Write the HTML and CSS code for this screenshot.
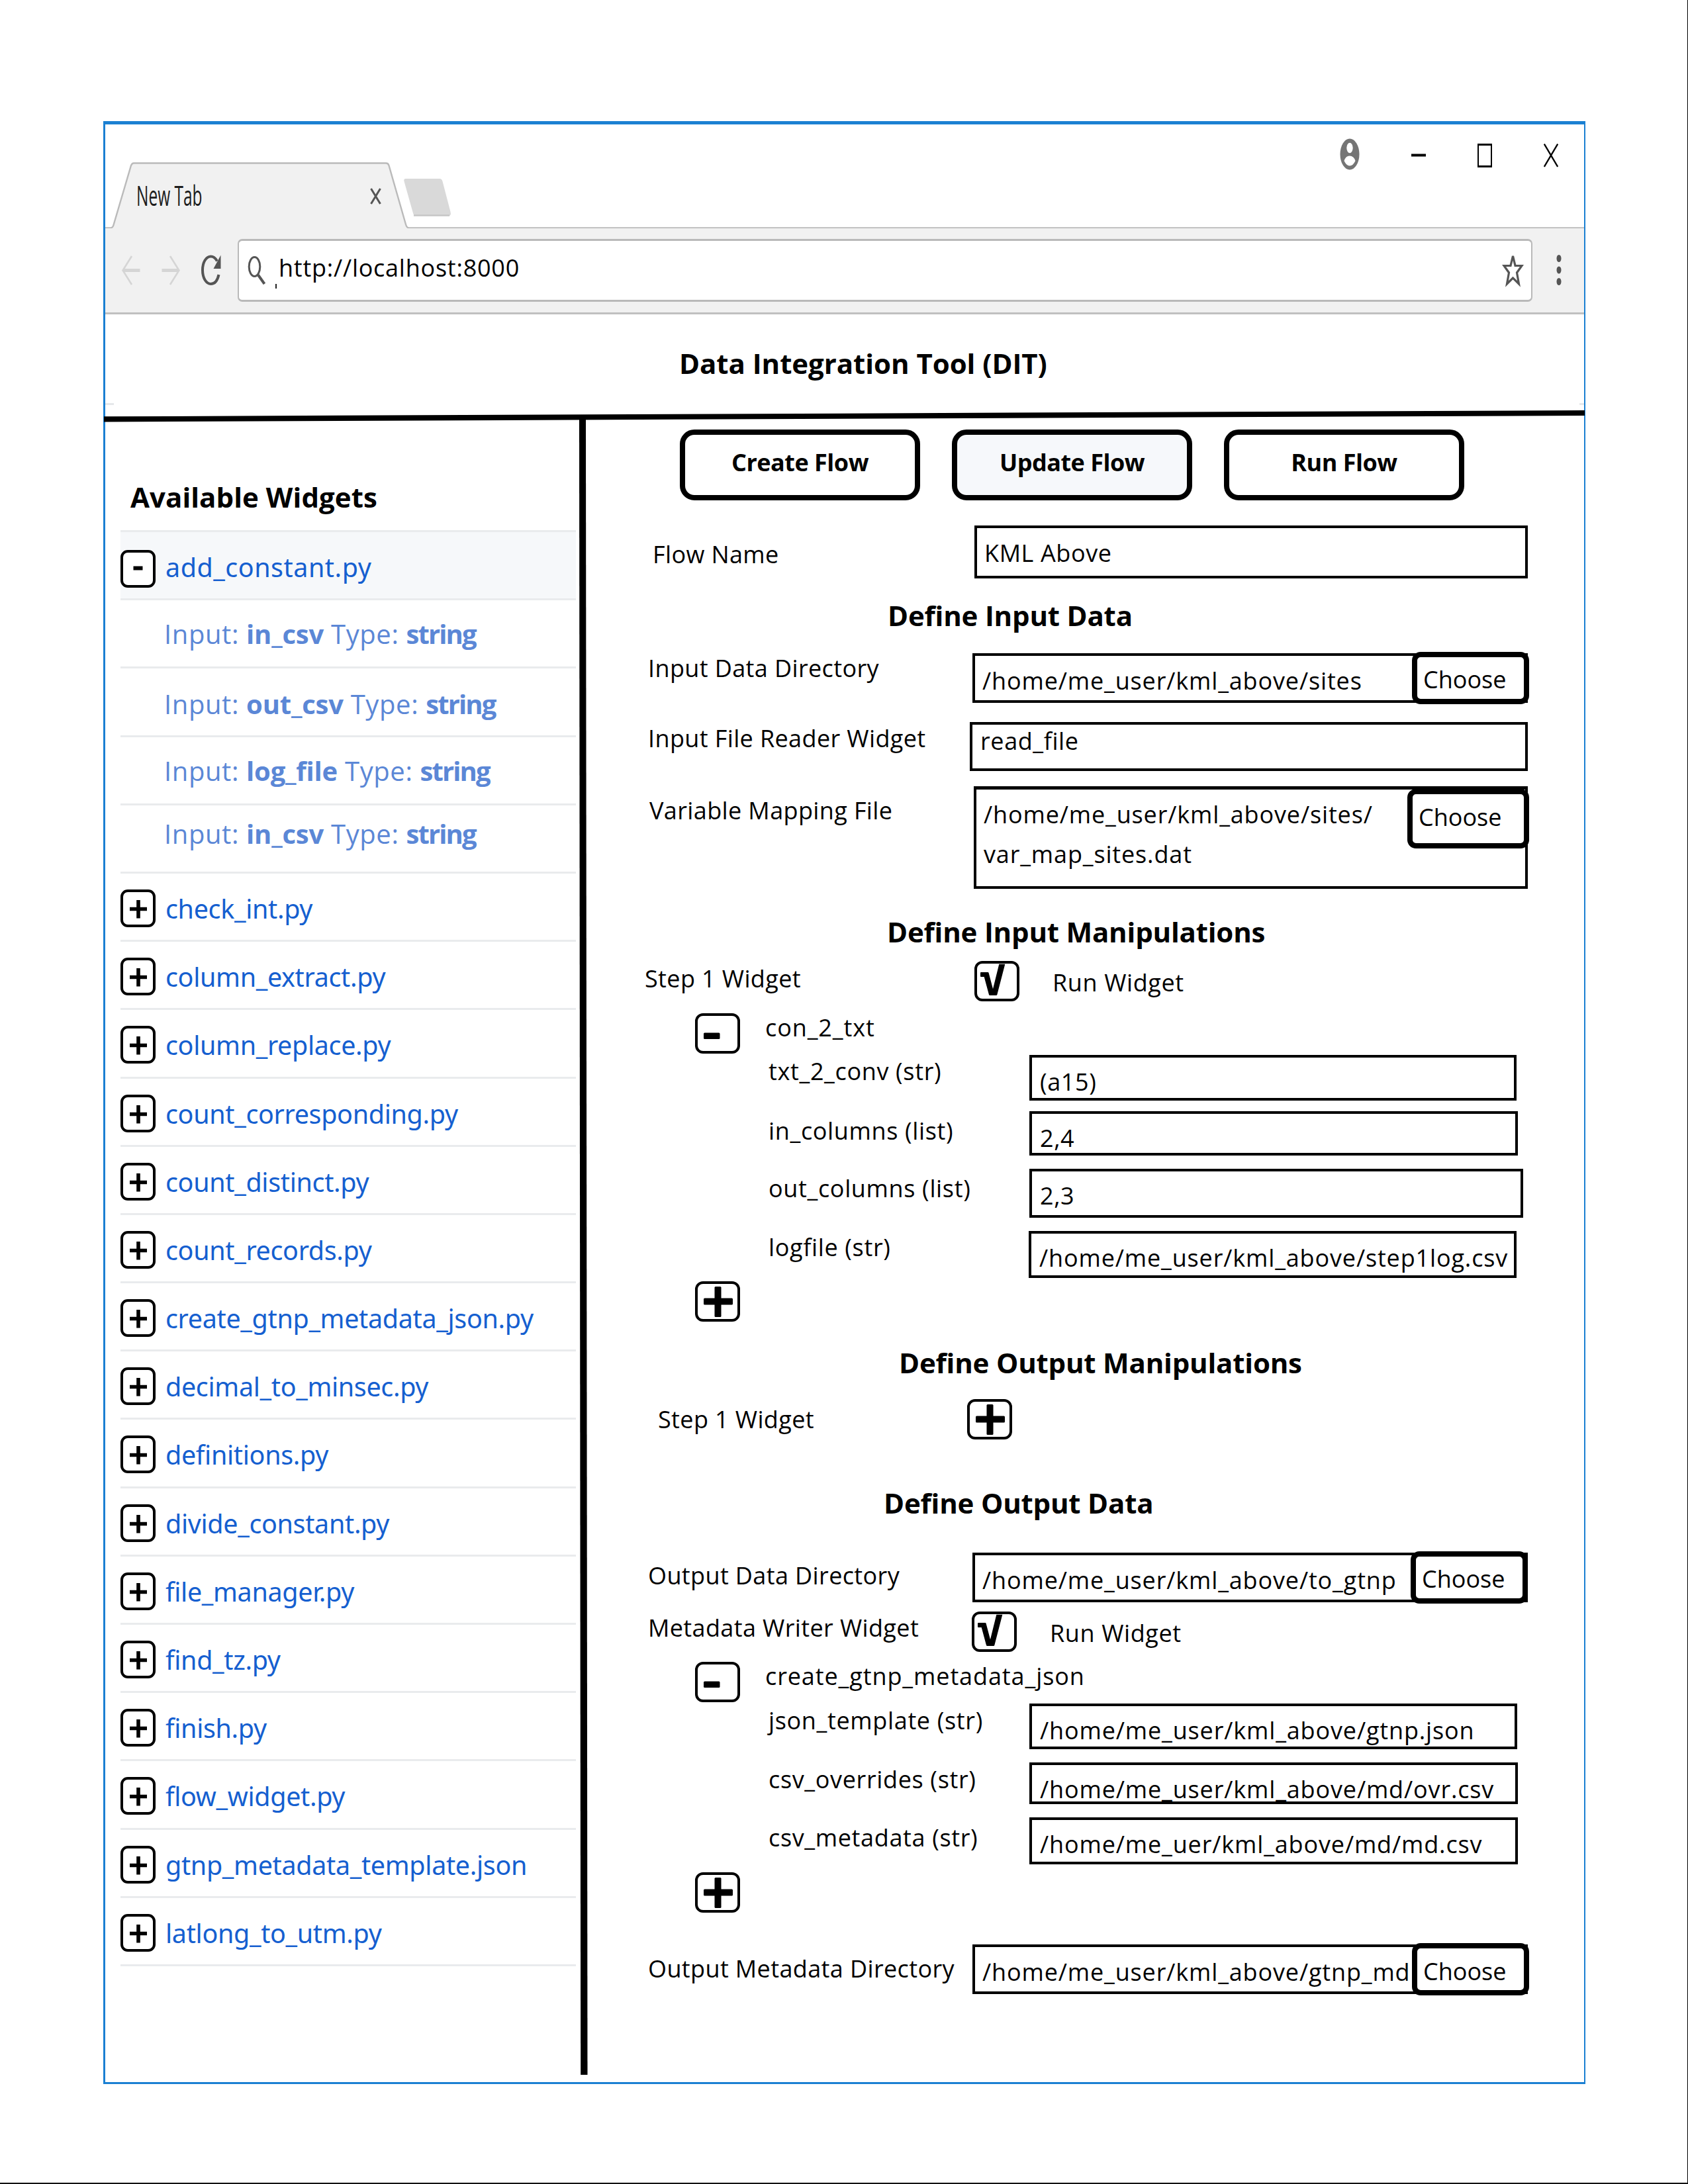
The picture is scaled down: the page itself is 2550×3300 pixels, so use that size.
FILE: index.html
```
<!DOCTYPE html>
<html lang="en">
<head>
<meta charset="utf-8">
<title>Data Integration Tool (DIT)</title>
<link rel="stylesheet" href="styles.css">
</head>
<body>
<svg class="defs" width="0" height="0" aria-hidden="true">
  <symbol id="plus-sm" viewBox="0 0 53 57"><path d="M14 29.5H40M27 16V43.5" stroke="#000" stroke-width="5.6" fill="none"/></symbol>
  <symbol id="minus-sm" viewBox="0 0 53 57"><path d="M19.5 27.5H33.5" stroke="#000" stroke-width="6"/></symbol>
  <symbol id="plus-lg" viewBox="0 0 68 61"><rect x="13" y="25.5" width="44" height="10" rx="1.5"/><rect x="29.5" y="8" width="10" height="46" rx="1.5"/></symbol>
  <symbol id="minus-lg" viewBox="0 0 68 61"><rect x="13" y="29.5" width="24.5" height="9.5" rx="1.5"/></symbol>
  <symbol id="check-lg" viewBox="0 0 68 61"><path d="M10 17H20.3Q21.3 17 21.6 18L28 42.3 37.3 4.7H46.3L34.3 51Q34 52 33 52H23.3Q22.3 52 22 51L14.7 24H10Q9 24 9 23V18Q9 17 10 17Z"/></symbol>
</svg>
<div class="page">
<div class="window">

  <header class="tabstrip">
    <svg class="tabstrip-art" width="2234" height="159" viewBox="0 0 2234 159">
      <path d="M-3 157.5H8Q11.500 157 12.500 153L39 63Q40.500 59.500 43 59.500H424Q427.500 59.500 428.500 63L454 152Q455.500 157.500 459 157.500H2236V162H-3Z" fill="#f1f1f1" stroke="#bababa" stroke-width="2.400"/>
      <path d="M454 83H505Q508.500 83 509.500 87L521.500 133Q523 139 519 139H469Q466 139 465 135L451.500 87Q450.500 83 454 83Z" fill="#d9d9d9"/>
      <path d="M466 138.500H520" stroke="#c6c6c6" stroke-width="2.500"/>
    </svg>
    <span class="tab-title">New Tab</span>
    <svg class="tab-close" width="17" height="27" viewBox="0 0 17 27"><path d="M1.500 2L15.500 25M15.500 2L1.500 25" stroke="#555" stroke-width="3" fill="none"/></svg>
    <div class="win-controls">
      <svg width="30" height="48" viewBox="0 0 30 48"><ellipse cx="15" cy="24" rx="14.500" ry="23.500" fill="#757575"/><ellipse cx="15" cy="14.500" rx="4.700" ry="7.700" fill="#fff"/><path d="M6.500 34Q9 26.500 15 26.500T23.500 34Q20 41.500 15 41.500T6.500 34Z" fill="#fff"/></svg>
      <svg width="22" height="48" viewBox="0 0 22 48"><path d="M0 25.500H22" stroke="#000" stroke-width="4"/></svg>
      <svg width="22" height="48" viewBox="0 0 22 48"><path d="M0 9.500H22M0 42.500H22" stroke="#000" stroke-width="3"/><path d="M1 8V44M21 8V44" stroke="#000" stroke-width="2"/></svg>
      <svg width="22" height="48" viewBox="0 0 22 48"><path d="M.8 8.500L21.200 43M21.200 8.500L.8 43" stroke="#000" stroke-width="2.400"/></svg>
    </div>
  </header>

  <div class="toolbar">
    <div class="nav">
      <svg width="28" height="48" viewBox="0 0 28 48"><path d="M3 24.500H27.500" stroke="#d5d5d5" stroke-width="5"/><path d="M15 3L1.500 24.500 15 46" fill="none" stroke="#d5d5d5" stroke-width="2.600"/></svg>
      <svg width="28" height="48" viewBox="0 0 28 48"><path d="M.5 24.500H25" stroke="#d5d5d5" stroke-width="5"/><path d="M13 3L26.500 24.500 13 46" fill="none" stroke="#d5d5d5" stroke-width="2.600"/></svg>
      <svg width="30" height="48" viewBox="0 0 30 48"><path d="M24 10.500C21 5 18 3.500 14.500 3.500 7.500 3.500 2 12 2 24S7.500 45 14.500 45C20 45 24.500 40 26.500 31" fill="none" stroke="#555" stroke-width="4"/><path d="M29.500 1.500V22H18.500Z" fill="#555"/></svg>
    </div>
    <div class="address">
      <svg class="lens" width="28" height="44" viewBox="0 0 28 44"><ellipse cx="10.500" cy="17" rx="8.300" ry="14.500" fill="none" stroke="#555" stroke-width="3"/><path d="M16 29.500L25.500 43" stroke="#555" stroke-width="4"/></svg>
      <span class="caret"></span>
      <span class="url">http://localhost:8000</span>
      <svg class="star" width="33" height="52" viewBox="0 0 33 52"><path d="M16.500 5L20 19.500H30L22.500 30 25.500 47 16.500 38 7.500 47 10.500 30 3 19.500H13Z" fill="none" stroke="#555" stroke-width="3.200"/></svg>
    </div>
    <svg class="dots" width="8" height="48" viewBox="0 0 8 48"><g fill="#555"><ellipse cx="4" cy="6.500" rx="3.500" ry="5.500"/><ellipse cx="4" cy="24" rx="3.500" ry="5.500"/><ellipse cx="4" cy="41.500" rx="3.500" ry="5.500"/></g></svg>
  </div>

  <div class="banner"><h1>Data Integration Tool (DIT)</h1></div>
  <svg class="rule" width="2237" height="18" viewBox="0 0 2237 18"><path d="M0 9.300L2237 0V8L0 17.500Z"/></svg>

  <div class="content">
    <aside class="sidebar">
      <h2>Available Widgets</h2>
      <ul class="widgets">
        <li class="open"><i class="toggle"><svg><use href="#minus-sm"/></svg></i><a>add_constant.py</a></li>
        <li class="arg">Input: <b>in_csv</b> Type: <b>string</b></li>
        <li class="arg arg-low">Input: <b>out_csv</b> Type: <b>string</b></li>
        <li class="arg">Input: <b>log_file</b> Type: <b>string</b></li>
        <li class="arg arg-high">Input: <b>in_csv</b> Type: <b>string</b></li>
        <li><i class="toggle"><svg><use href="#plus-sm"/></svg></i><a>check_int.py</a></li>
        <li><i class="toggle"><svg><use href="#plus-sm"/></svg></i><a>column_extract.py</a></li>
        <li><i class="toggle"><svg><use href="#plus-sm"/></svg></i><a>column_replace.py</a></li>
        <li><i class="toggle"><svg><use href="#plus-sm"/></svg></i><a>count_corresponding.py</a></li>
        <li><i class="toggle"><svg><use href="#plus-sm"/></svg></i><a>count_distinct.py</a></li>
        <li><i class="toggle"><svg><use href="#plus-sm"/></svg></i><a>count_records.py</a></li>
        <li><i class="toggle"><svg><use href="#plus-sm"/></svg></i><a>create_gtnp_metadata_json.py</a></li>
        <li><i class="toggle"><svg><use href="#plus-sm"/></svg></i><a>decimal_to_minsec.py</a></li>
        <li><i class="toggle"><svg><use href="#plus-sm"/></svg></i><a>definitions.py</a></li>
        <li><i class="toggle"><svg><use href="#plus-sm"/></svg></i><a>divide_constant.py</a></li>
        <li><i class="toggle"><svg><use href="#plus-sm"/></svg></i><a>file_manager.py</a></li>
        <li><i class="toggle"><svg><use href="#plus-sm"/></svg></i><a>find_tz.py</a></li>
        <li><i class="toggle"><svg><use href="#plus-sm"/></svg></i><a>finish.py</a></li>
        <li><i class="toggle"><svg><use href="#plus-sm"/></svg></i><a>flow_widget.py</a></li>
        <li><i class="toggle"><svg><use href="#plus-sm"/></svg></i><a>gtnp_metadata_template.json</a></li>
        <li><i class="toggle"><svg><use href="#plus-sm"/></svg></i><a>latlong_to_utm.py</a></li>
      </ul>
    </aside>

    <svg class="divider" width="13" height="2505" viewBox="0 0 13 2505"><path d="M0 0H10L12.500 2505H2.200Z"/></svg>

    <main class="main">
      <div class="actions">
        <button>Create Flow</button><button class="active">Update Flow</button><button>Run Flow</button>
      </div>

      <div class="row flow-name"><label>Flow Name</label><div class="field short">KML Above</div></div>

      <h3 class="h-input">Define Input Data</h3>
      <div class="row input-dir"><label>Input Data Directory</label><div class="field">/home/me_user/kml_above/sites<button class="choose">Choose</button></div></div>
      <div class="row reader"><label>Input File Reader Widget</label><div class="field short">read_file</div></div>
      <div class="row mapping"><label>Variable Mapping File</label><div class="field">/home/me_user/kml_above/sites/<br>var_map_sites.dat<button class="choose">Choose</button></div></div>

      <h3 class="h-manip">Define Input Manipulations</h3>
      <div class="row step-in"><label>Step 1 Widget</label><i class="box"><svg><use href="#check-lg"/></svg></i><label class="run">Run Widget</label></div>
      <div class="row con-txt"><i class="box"><svg><use href="#minus-lg"/></svg></i><label class="name">con_2_txt</label></div>
      <div class="row param p-txt"><label>txt_2_conv (str)</label><div class="field short">(a15)</div></div>
      <div class="row param p-in"><label>in_columns (list)</label><div class="field short">2,4</div></div>
      <div class="row param p-out"><label>out_columns (list)</label><div class="field short">2,3</div></div>
      <div class="row param p-log"><label>logfile (str)</label><div class="field">/home/me_user/kml_above/step1log.csv</div></div>
      <div class="row add-in"><i class="box"><svg><use href="#plus-lg"/></svg></i></div>

      <h3 class="h-outmanip">Define Output Manipulations</h3>
      <div class="row step-out"><label>Step 1 Widget</label><i class="box"><svg><use href="#plus-lg"/></svg></i></div>

      <h3 class="h-output">Define Output Data</h3>
      <div class="row output-dir"><label>Output Data Directory</label><div class="field">/home/me_user/kml_above/to_gtnp<button class="choose">Choose</button></div></div>
      <div class="row writer"><label>Metadata Writer Widget</label><i class="box"><svg><use href="#check-lg"/></svg></i><label class="run">Run Widget</label></div>
      <div class="row gtnp"><i class="box"><svg><use href="#minus-lg"/></svg></i><label class="name">create_gtnp_metadata_json</label></div>
      <div class="row param p-json"><label>json_template (str)</label><div class="field">/home/me_user/kml_above/gtnp.json</div></div>
      <div class="row param p-ovr"><label>csv_overrides (str)</label><div class="field">/home/me_user/kml_above/md/ovr.csv</div></div>
      <div class="row param p-md"><label>csv_metadata (str)</label><div class="field">/home/me_uer/kml_above/md/md.csv</div></div>
      <div class="row add-out"><i class="box"><svg><use href="#plus-lg"/></svg></i></div>
      <div class="row meta-dir"><label>Output Metadata Directory</label><div class="field">/home/me_user/kml_above/gtnp_md<button class="choose">Choose</button></div></div>
    </main>
  </div>
</div>
</div>
</body>
</html>
```
FILE: styles.css
```
* { box-sizing: border-box; margin: 0; padding: 0; }
body { background: #fff; color: #000; font: 36px/44px "Open Sans", sans-serif; }
svg { display: block; flex: none; }
.defs { position: absolute; }

.page {
  width: 2550px; height: 3300px; padding: 183px 0 0 156px;
  border-right: 1px solid #000; border-bottom: 2px solid #111;
}
.window {
  width: 2239px; height: 2966px;
  border: solid #1b80d2; border-width: 5px 2px 3px 3px;
  display: flex; flex-direction: column;
}

/* Browser chrome */
.tabstrip { position: relative; height: 157px; display: flex; align-items: flex-start; flex: none; }
.tabstrip-art { position: absolute; left: 0; top: -1px; }
.tab-title {
  position: relative; margin: 79px 0 0 47px; width: 353px;
  font: 42px/56px "Open Sans", sans-serif; color: #1c1c1c;
  transform: scaleX(.582); transform-origin: left;
}
.tab-close { position: relative; margin-top: 95px; }
.win-controls { display: flex; margin: 21px 39px 0 auto; gap: 78px; }
.toolbar {
  position: relative; height: 130px; flex: none; display: flex; align-items: flex-start;
  background: #f1f1f1; border-bottom: 3px solid #c0c0c0;
}
.nav { display: flex; margin: 39px 0 0 25px; gap: 32px; width: 175px; }
.address {
  width: 1956px; height: 95px; margin-top: 16px; display: flex;
  background: #fff; border: solid #b9b9b9; border-width: 3px 2px; border-radius: 7px;
}
.lens { margin: 22px 0 0 13px; }
.caret { width: 2px; height: 7px; background: #222; margin: 65px 0 0 14px; }
.url { margin: 19px 0 0 3px; letter-spacing: .75px; }
.star { margin: 18px 11px 0 auto; }
.dots { margin: 39px 0 0 36px; }

.banner { position: relative; height: 145px; flex: none; padding: 48px 0 0 867px; }
.banner::before, .banner::after { content: ""; position: absolute; top: 134px; left: 0; width: 13px; height: 3px; background: #e6e8ea; }
.banner::after { left: auto; right: 0; width: 7px; }
h1, h3 { font: 700 42px/52px "Open Sans", sans-serif; letter-spacing: -.2px; white-space: nowrap; }
h1 { letter-spacing: -.05px; }
.rule { margin-left: -2px; }
.content { display: flex; flex: 1; }

/* Sidebar */
.sidebar { width: 716px; padding: 87px 0 0 23px; flex: none; }
.sidebar h2 { font: 700 42px/52px "Open Sans", sans-serif; letter-spacing: .05px; margin: 0 0 24px 15px; }
.widgets { list-style: none; width: 688px; border-bottom: 3px solid #e9ebed; }
.widgets li { display: flex; height: 103.2px; border-top: 3px solid #e9ebed; }
.widgets li.open { background: #f6f8fa; }
.toggle { width: 53px; height: 57px; margin-top: 24px; border: 4px solid #000; border-radius: 11px; background: #fff; flex: none; }
.open .toggle { margin-top: 27px; }
.toggle svg { width: 53px; height: 57px; margin: -4px; }
.widgets a { margin: 26px 0 0 15px; font: 39.5px/54px "Noto Sans", sans-serif; color: #155fd0; letter-spacing: -.35px; }
.widgets .open a { letter-spacing: .5px; }
.widgets .arg {
  display: block; padding: 27px 0 0 66px; color: #5b87d6;
  font: 40px/48px "Open Sans", sans-serif; letter-spacing: .6px; white-space: nowrap;
}
.arg b { letter-spacing: -.2px; }
.arg b:last-child { letter-spacing: -1.9px; }
.widgets .arg-low { padding-top: 30px; }
.widgets .arg-high { padding-top: 19.5px; }
.divider { margin-top: -8px; }

/* Flow form */
.main { flex: 1; }
button { font: inherit; color: inherit; background: #fff; border: 8px solid #000; }
.actions { display: flex; gap: 48px; padding: 11px 0 0 139px; }
.actions button {
  width: 363px; height: 107px; border-radius: 22px; padding-bottom: 8px;
  font-weight: 700; letter-spacing: -.5px;
}
.actions .active { background: #f6f8fb; }

.row { display: flex; align-items: flex-start; height: var(--h); margin-top: var(--gap); white-space: nowrap; letter-spacing: .38px; }
.row > label:first-child { width: calc(var(--fx) - var(--lx)); margin-left: var(--lx); padding-top: var(--lt); flex: none; }
.field {
  position: relative; width: var(--fw); height: var(--fh, var(--h)); margin-top: var(--ft, 0);
  border: 4px solid #000; padding: var(--tt) 0 0 var(--tx, 11px); letter-spacing: .85px; flex: none;
}
.field.short { letter-spacing: .6px; }
.param { --lx: 273px; --fx: 667px; --tx: 12px; letter-spacing: .65px; }
.choose {
  position: absolute; top: var(--by); right: -6px; width: var(--bw, 177px); height: var(--bh, 79px);
  border-radius: 13px; padding: var(--bt) 0 0 9px; text-align: left; line-height: 44px; letter-spacing: 0;
  display: flex; align-items: flex-start;
}
.box { width: 68px; height: 61px; border: 4px solid #000; border-radius: 12px; flex: none; }
.box svg { width: 68px; height: 61px; margin: -4px; }
.box:first-child { margin-left: 162px; }
.run { margin-left: 50px; padding-top: 11px; letter-spacing: .6px; }
.name { margin-left: 38px; letter-spacing: .9px; }

.h-input { margin: 30px 0 0 453px; }
.h-manip { margin: 39px 0 0 452px; }
.h-outmanip { margin: 36px 0 0 470px; }
.h-output { margin: 70px 0 0 447px; }

.flow-name { --gap: 38px; --h: 80px; --lx: 98px; --lt: 22px; --fx: 584px; --fw: 836px; --tx: 11px; --tt: 16px; }
.input-dir { --gap: 29px; --h: 80px; --lx: 91px; --lt: 3px; --fx: 581px; --fw: 839px; --ft: 2px; --fh: 75px; --tt: 16px; --by: -6px; --bt: 12px; }
.reader { --gap: 26px; --h: 74px; --lx: 91px; --lt: 3px; --fx: 577px; --fw: 843px; --tx: 12px; --tt: 3px; }
.mapping { --gap: 23px; --h: 155px; --lx: 93px; --lt: 15px; --fx: 583px; --fw: 837px; --tt: 8px; --by: -1px; --bt: 13px; --bw: 184px; --bh: 90px; }
.mapping .field { border-top-width: 5px; line-height: 60px; }
.step-in { --gap: 18px; --h: 62px; --lx: 86px; --lt: 5px; --fx: 584px; }
.con-txt { --gap: 17px; --h: 61px; }
.p-txt { --gap: 2px; --h: 69px; --lt: 3px; --fw: 736px; --tt: 15px; }
.p-in { --gap: 16px; --h: 67px; --lt: 8px; --fw: 738px; --tt: 15px; }
.p-out { --gap: 20px; --h: 74px; --lt: 8px; --fw: 746px; --tt: 15px; }
.p-log { --gap: 20px; --h: 71px; --lt: 3px; --fx: 666px; --fw: 737px; --tt: 15px; }
.add-in { --gap: 5px; --h: 61px; }
.step-out { --gap: 29px; --h: 61px; --lx: 106px; --lt: 9px; --fx: 573px; }
.output-dir { --gap: 47px; --h: 79px; --lx: 91px; --lt: 15px; --fx: 581px; --fw: 839px; --ft: 2px; --fh: 75px; --tt: 16px; --by: -6px; --bt: 12px; }
.output-dir .choose { right: -4px; }
.writer { --gap: 12px; --h: 62px; --lx: 91px; --lt: 3px; --fx: 580px; }
.gtnp { --gap: 14px; --h: 61px; }
.p-json { --gap: 2px; --h: 69px; --lt: 4px; --fw: 737px; --tt: 15px; }
.p-ovr { --gap: 20px; --h: 63px; --lt: 4px; --fw: 738px; --tt: 15px; }
.p-md { --gap: 20px; --h: 71px; --lt: 9px; --fw: 738px; --tt: 15px; }
.add-out { --gap: 12px; --h: 62px; }
.meta-dir { --gap: 45px; --h: 79px; --lx: 91px; --lt: 17px; --fx: 581px; --fw: 839px; --ft: 2px; --fh: 75px; --tt: 16px; --by: -6px; --bt: 13px; }
```
